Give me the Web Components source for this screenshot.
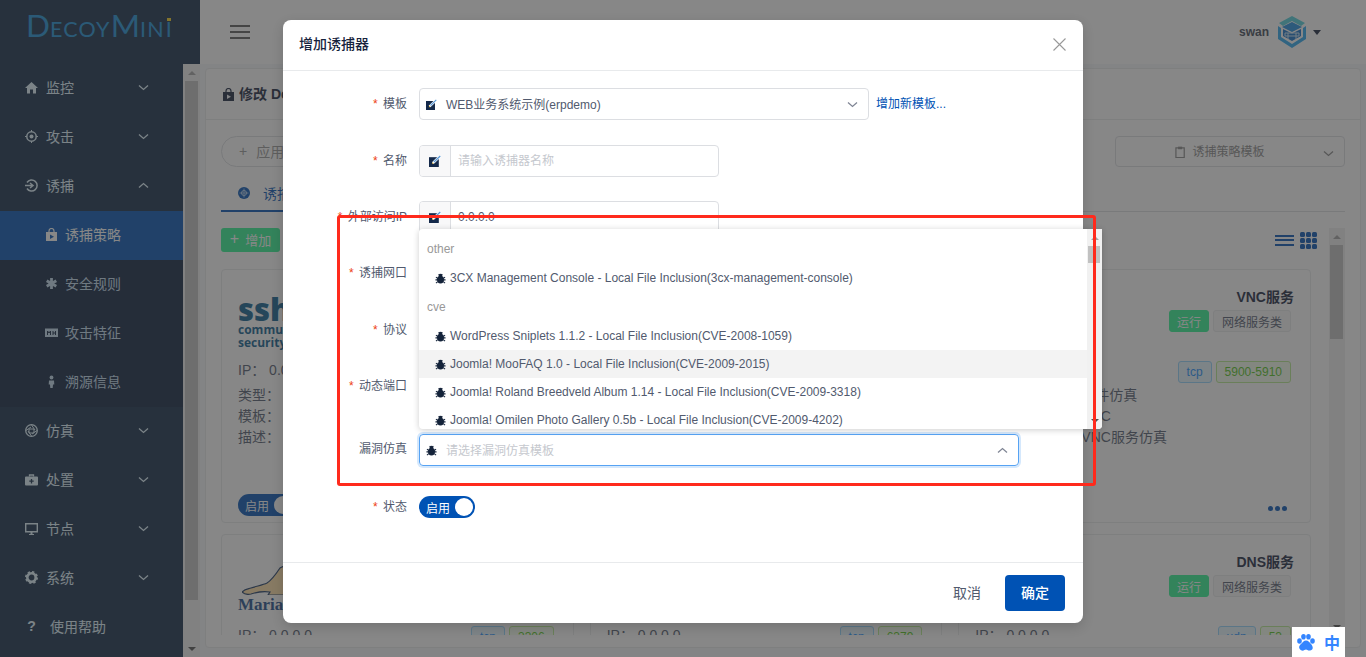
<!DOCTYPE html>
<html lang="zh">
<head>
<meta charset="utf-8">
<title>DecoyMini</title>
<style>
  html, body { margin: 0; height: 657px; overflow: hidden; }
  body { font: 14px "Liberation Sans", "Noto Sans CJK SC", sans-serif; color: #515a6e; background: #f5f7f9; }
</style>
</head>
<body>
<decoy-app></decoy-app>

<script>
const ICONS = {
  home: '<path d="M6.5 1 13 7h-2v5.500H8V8.500H5V12.500H2V7H0z" fill="currentColor"/>',
  target: '<circle cx="6.500" cy="6.500" r="4.700" fill="none" stroke="currentColor" stroke-width="1.500"/><circle cx="6.500" cy="6.500" r="2" fill="currentColor"/><path d="M6.500 0v2M6.500 11v2M0 6.500h2M11 6.500h2" stroke="currentColor"/>',
  login: '<path d="M2 3.500A5.500 5.500 0 1 1 2 9.500" fill="none" stroke="currentColor" stroke-width="1.500"/><path d="M0 6.500h7M5 4l3 2.500L5 9" fill="none" stroke="currentColor" stroke-width="1.500"/>',
  bag: '<path d="M4 4V3a2.500 2.500 0 0 1 5 0v1" fill="none" stroke="currentColor" stroke-width="1.200"/><path d="M1 4h11v9H1z" fill="currentColor"/><path d="M5 6.500v4.500l4-2.200z" fill="var(--cut,#fff)"/>',
  star: '<path d="M6.500 1v11M1.700 3.700l9.600 5.600M11.300 3.700l-9.600 5.600" stroke="currentColor" stroke-width="2.800"/>',
  card: '<path d="M0 2.500h13v8.500H0z" fill="currentColor"/><path d="M2.500 9V5l1.500 2 1.500-2v4M8 5v4M8 7h2.500M10.500 5v4" fill="none" stroke="var(--cut,#0a203c)"/>',
  person: '<circle cx="6.500" cy="2.500" r="1.900" fill="currentColor"/><path d="M4 5.500h5l.3 4H8l-.3 3.500H5.300L5 9.500H3.700z" fill="currentColor"/>',
  aperture: '<circle cx="6.500" cy="6.500" r="5.800" fill="none" stroke="currentColor" stroke-width="1.300"/><path d="M6.500 1 10 6M12 6.500 7 10M6.500 12 3 7M1 6.500 6 3M4 5h5v4H4z" fill="none" stroke="currentColor"/>',
  kit: '<path d="M4.500 3.500V2h4v1.500" fill="none" stroke="currentColor" stroke-width="1.300"/><path d="M1 3.500h11a1 1 0 0 1 1 1v7a1 1 0 0 1-1 1H1a1 1 0 0 1-1-1v-7a1 1 0 0 1 1-1z" fill="currentColor"/><path d="M6.500 6v4.500M4.300 8.200h4.400" stroke="var(--cut,#112a48)" stroke-width="1.300"/>',
  monitor: '<path d="M.7 1.700h11.600v8H.7z" fill="none" stroke="currentColor" stroke-width="1.400"/><path d="M4 12h5v1H4zM5.500 10h2v2h-2z" fill="currentColor"/>',
  gear: '<circle cx="6.500" cy="6.500" r="4.200" fill="none" stroke="currentColor" stroke-width="2.600"/><circle cx="6.500" cy="6.500" r="5.500" fill="none" stroke="currentColor" stroke-width="2" stroke-dasharray="2.300 2"/>',
  edit: '<path d="M0 2h9v9H0z" fill="#14294a"/><path d="M3.500 7.500 10.300.9" stroke="#fff" stroke-width="2.400"/><path d="M4.500 6.500 10.300.9" stroke="#5b9ad8" stroke-width="1.200"/><path d="M2.800 8.300l.4-1.700 1.300 1.300z" fill="#e8c04a"/>',
  bug: '<ellipse cx="6" cy="7.200" rx="3.800" ry="4.300" fill="#14233a"/><circle cx="6" cy="2.800" r="2" fill="#14233a"/><path d="M1 4.500l2 1.500M11 4.500 9 6M.5 7.500h2.500M11.500 7.500H9M1 11l2-1.500M11 11 9 9.500M4 1l1 1.500M8 1 7 2.500" stroke="#14233a" stroke-width="1.100"/>',
  clip: '<path d="M1 2h9v10.500H1z" fill="none" stroke="currentColor" stroke-width="1.300"/><path d="M3.300 .7h4.400v2.800H3.300z" fill="currentColor"/>',
  chevronDown: '<path d="M1 1.500l4.500 4 4.500-4" fill="none" stroke="currentColor" stroke-width="1.300"/>',
  chevronUp: '<path d="M1 5.500l4.500-4 4.500 4" fill="none" stroke="currentColor" stroke-width="1.300"/>'
};

class UiIcon extends HTMLElement {
  constructor() {
    super();
    const size = this.getAttribute('size') || 13;
    const box = this.getAttribute('box') || '0 0 13 13';
    this.attachShadow({ mode: 'open' }).innerHTML = `
      <style>:host { display: inline-flex; flex: none; } svg { display: block; }</style>
      <svg width="${size}" height="${size}" viewBox="${box}">${ICONS[this.getAttribute('name')] || ''}</svg>`;
  }
}
customElements.define('ui-icon', UiIcon);

// fake browser scrollbar, drawn as a column
class ScrollRail extends HTMLElement {
  constructor() {
    super();
    const start = this.getAttribute('start') || 0;
    const len = this.getAttribute('len') || 20;
    this.attachShadow({ mode: 'open' }).innerHTML = `
      <style>
        :host { display: flex; flex-direction: column; flex: none; width: var(--w, 17px); background: #f1f1f1; box-sizing: border-box; }
        .arrow { height: 17px; flex: none; display: flex; align-items: center; justify-content: center; }
        .arrow i { width: 0; height: 0; border: 4px solid transparent; border-top-width: 0; border-bottom: 4px solid #a3a3a3; }
        .arrow.down i { border-bottom-width: 0; border-top: 4px solid #505050; border-bottom-color: transparent; }
        .mid { flex: 1; min-height: 0; }
        .thumb { margin: ${start}px var(--mr, 2px) 0 var(--ml, 2px); height: ${len}px; background: #c1c1c1; }
      </style>
      <div class="arrow"><i></i></div>
      <div class="mid"><div class="thumb"></div></div>
      <div class="arrow down"><i></i></div>`;
  }
}
customElements.define('scroll-rail', ScrollRail);

const sideTpl = document.createElement('template');
sideTpl.innerHTML = `
  <style>
    :host { display: flex; flex-direction: column; width: 200px; flex: none; background: #112a48; height: 657px; }
    .logo { height: 64px; display: flex; align-items: baseline; padding: 11px 0 0 26px; box-sizing: border-box; font-family: "Lato", "Liberation Sans", sans-serif; color: #1a90d8; white-space: nowrap; line-height: 28px; }
    .logo b { font-weight: 400; font-size: 31.500px; }
    .logo span { font-size: 21.500px; letter-spacing: 1.200px; }
    .logo em { font-style: normal; font-size: 21.500px; position: relative; margin-left: 1px; }
    .logo em::before { content: ""; position: absolute; left: 1px; right: 1px; top: 3px; height: 3px; background: #f5d020; }
    .body { flex: 1; display: flex; min-height: 0; }
    nav { flex: 1; min-width: 0; }
    .sub { background: #0a203c; }
  </style>
  <div class="logo"><b>D</b><span>ECOY</span><b>M</b><span>IN</span><em>I</em></div>
  <div class="body">
    <nav>
      <side-item icon="home" label="监控" arrow="down"></side-item>
      <side-item icon="target" label="攻击" arrow="down"></side-item>
      <side-item icon="login" label="诱捕" arrow="up"></side-item>
      <div class="sub">
        <side-item sub active icon="bag" label="诱捕策略"></side-item>
        <side-item sub icon="star" label="安全规则"></side-item>
        <side-item sub icon="card" label="攻击特征"></side-item>
        <side-item sub icon="person" label="溯源信息"></side-item>
      </div>
      <side-item icon="aperture" label="仿真" arrow="down"></side-item>
      <side-item icon="kit" label="处置" arrow="down"></side-item>
      <side-item icon="monitor" label="节点" arrow="down"></side-item>
      <side-item icon="gear" label="系统" arrow="down"></side-item>
      <side-item help label="使用帮助"></side-item>
    </nav>
    <scroll-rail start="0" len="519"></scroll-rail>
  </div>`;
class DecoySidebar extends HTMLElement {
  constructor() {
    super();
    this.attachShadow({ mode: 'open' }).appendChild(sideTpl.content.cloneNode(true));
  }
}
customElements.define('decoy-sidebar', DecoySidebar);

class SideItem extends HTMLElement {
  constructor() {
    super();
    const sub = this.hasAttribute('sub');
    const help = this.hasAttribute('help');
    const arrow = this.getAttribute('arrow');
    this.attachShadow({ mode: 'open' }).innerHTML = `
      <style>
        :host { display: flex; align-items: center; height: 49px; padding: 0 0 3px ${sub ? 45 : 25}px; color: #e0f5ff; font-size: 14px; box-sizing: border-box; }
        :host([active]) { background: #0052b4; color: #fff; --cut: #0052b4; }
        :host([sub]:not([active])) { color: #c3dcf0; }
        .t { margin-left: ${help ? 12 : sub ? 7 : 8}px; width: ${sub ? 'auto' : '92px'}; }
        .q { width: 13px; text-align: center; font-weight: 700; font-size: 14px; }
      </style>
      ${help ? '<span class="q">?</span>' : `<ui-icon name="${this.getAttribute('icon')}"></ui-icon>`}
      <span class="t">${this.getAttribute('label')}</span>
      ${arrow ? `<ui-icon size="11" box="0 0 11 7" name="${arrow === 'up' ? 'chevronUp' : 'chevronDown'}"></ui-icon>` : ''}`;
  }
}
customElements.define('side-item', SideItem);

class TopBar extends HTMLElement {
  constructor() {
    super();
    this.attachShadow({ mode: 'open' }).innerHTML = `
      <style>
        :host { display: flex; align-items: center; height: 64px; flex: none; background: #fff; box-sizing: border-box; padding: 0 45px 0 30px; color: #515a6e; }
        .burger { width: 20px; height: 14px; border-top: 2px solid #5a5a5a; border-bottom: 2px solid #5a5a5a; box-sizing: border-box; position: relative; }
        .burger::after { content: ""; position: absolute; left: 0; right: 0; top: 4px; height: 2px; background: #5a5a5a; }
        .user { margin-left: auto; display: flex; align-items: center; font-size: 12px; font-weight: 700; color: #3d4656; }
        svg { margin-left: 7px; display: block; }
        .caret { width: 0; height: 0; margin-left: 5px; border: 4px solid transparent; border-top: 5px solid #17233d; border-bottom: 0; }
      </style>
      <div class="burger"></div>
      <div class="user"><span>swan</span>
        <svg width="32" height="32" viewBox="0 0 32 32">
          <path d="M16 0 29 7l-4 3-9-5-9 5-4-3z" fill="#4fd0dc"/>
          <path d="M2 10v13l14 9 14-9V10l-3 2v9l-11 7-11-7v-9z" fill="#2aa8f0"/>
          <path d="M16 6l10 5-10 5-10-5z" fill="#1f8ee0"/>
          <path d="M7 13l9 4.500 9-4.500v7l-9 5-9-5z" fill="#1672c8"/>
          <path d="M9 17h14v3H9zM12 17v6M20 17v6" fill="none" stroke="#cfe8f8"/>
        </svg>
        <span class="caret"></span>
      </div>`;
  }
}
customElements.define('top-bar', TopBar);

class UiTag extends HTMLElement {
  constructor() {
    super();
    this.attachShadow({ mode: 'open' }).innerHTML = `
      <style>
        :host { display: inline-flex; align-items: center; justify-content: center; height: 22px; box-sizing: border-box; padding: 0 8px; border-radius: 3px; font-size: 12px; border: 1px solid #e8eaec; background: #f7f7f7; color: #515a6e; white-space: nowrap; }
        :host([kind=run]) { background: #2df591; border-color: #2df591; color: #fff; width: 40px; padding: 0; }
        :host([kind=blue]) { background: #e6f7ff; border-color: #91d5ff; color: #1890ff; }
        :host([kind=green]) { background: #f6ffed; border-color: #b7eb8f; color: #52c41a; }
      </style><slot></slot>`;
  }
}
customElements.define('ui-tag', UiTag);

class UiSwitch extends HTMLElement {
  constructor() {
    super();
    this.attachShadow({ mode: 'open' }).innerHTML = `
      <style>
        :host { display: inline-flex; align-items: center; width: 56px; height: 22px; box-sizing: border-box; border-radius: 11px; background: #0052b4; color: #fff; font-size: 12px; padding: 0 2px 0 7px; justify-content: space-between; }
        i { width: 18px; height: 18px; background: #fff; border-radius: 50%; }
      </style><span>启用</span><i></i>`;
  }
}
customElements.define('ui-switch', UiSwitch);

// only the fields the page passes in are drawn
class ServiceCard extends HTMLElement {
  constructor() {
    super();
    const a = n => this.getAttribute(n) || '';
    const row = (k, v) => `<dt>${k}：</dt><dd>${v}</dd>`;
    this.attachShadow({ mode: 'open' }).innerHTML = `
      <style>
        :host { display: flex; flex-direction: column; height: 254px; box-sizing: border-box; border: 1px solid #e8eaec; border-radius: 4px; background: #fff; padding: 17px 16px 0 16px; position: relative; color: #515a6e; font-size: 14px; }
        .top { display: flex; justify-content: space-between; height: 72px; flex: none; }
        .name { text-align: right; font-weight: 700; color: #17233d; line-height: 20px; }
        .tags { display: flex; gap: 4px; justify-content: flex-end; margin: 3px 3px 0 0; }
        .ip { display: flex; justify-content: space-between; align-items: center; height: 22px; margin: 2px 3px 0 0; flex: none; }
        .ip > span { padding-bottom: 6px; }
        .ip div { display: flex; gap: 4px; }
        dl { display: grid; grid-template-columns: 106px 1fr; margin: 2px 0 0; line-height: 21px; }
        dt, dd { margin: 0; }
        .foot { margin-top: auto; display: flex; justify-content: space-between; align-items: center; height: 22px; margin-bottom: 6px; padding-right: 7px; }
        .dots { display: flex; gap: 2px; margin-top: 6px; }
        .dots i { width: 5px; height: 5px; border-radius: 50%; background: #0052b4; }
      </style>
      <div class="top">
        <div><slot name="logo"></slot></div>
        ${a('name') ? `<div>
          <div class="name">${a('name')}</div>
          <div class="tags"><ui-tag kind="run">运行</ui-tag><ui-tag>网络服务类</ui-tag></div>
        </div>` : ''}
      </div>
      <div class="ip">${a('ip') ? `<span>IP： ${a('ip')}</span>` : '<span></span>'}${a('proto') ? `<div><ui-tag kind="blue">${a('proto')}</ui-tag><ui-tag kind="green">${a('port')}</ui-tag></div>` : ''}</div>
      <dl>${a('labels') ? row('类型', a('kind')) + row('模板', a('tpl')) + row('描述', a('desc')) : ''}</dl>
      <div class="foot">${a('labels') === 'switch' ? '<ui-switch></ui-switch>' : '<span></span>'}${a('desc') ? '<div class="dots"><i></i><i></i><i></i></div>' : ''}</div>`;
  }
}
customElements.define('service-card', ServiceCard);

const pageTpl = document.createElement('template');
pageTpl.innerHTML = `
  <style>
    :host { display: flex; flex-direction: column; margin: 4px 5px 9px; height: 580px; box-sizing: border-box; border: 1px solid #e8eaec; border-radius: 4px; background: #fff; }
    .head { height: 50px; flex: none; display: flex; align-items: center; gap: 4px; padding-left: 16px; border-bottom: 1px solid #e8eaec; font-weight: 700; color: #17233d; --cut: #f5f7f9; }
    .head span { padding-bottom: 2px; }
    .inner { flex: 1; min-height: 0; padding: 16px 15px 12px 15px; display: flex; flex-direction: column; }
    .tools { display: flex; justify-content: space-between; height: 31px; flex: none; }
    .pill { width: 200px; border: 1px solid #dcdee2; border-radius: 16px; display: flex; align-items: center; padding: 0 0 2px 17px; box-sizing: border-box; font-size: 14px; color: #999; gap: 9px; }
    .tpl { width: 230px; border: 1px solid #dcdee2; border-radius: 4px; display: flex; align-items: center; justify-content: center; gap: 5px; padding-right: 20px; font-size: 12px; color: #888; box-sizing: border-box; position: relative; }
    .tpl .chev { position: absolute; right: 10px; top: 11px; }
    .tpl span { padding-bottom: 2px; }
    .tabs { height: 44px; flex: none; border-bottom: 1px solid #dcdee2; display: flex; align-items: flex-end; }
    .tab { width: 90px; height: 44px; box-sizing: border-box; border-bottom: 2px solid #0052b4; margin-bottom: -1px; padding: 15px 0 0 17px; color: #0052b4; display: flex; gap: 13px; }
    .tab svg { display: block; margin-top: 4px; flex: none; }
    .scroll { flex: 1; min-height: 0; display: flex; margin-top: 16px; overflow: hidden; }
    .flow { flex: 1; min-width: 0; overflow: hidden; padding-right: 18px; }
    .bar { display: flex; justify-content: space-between; align-items: center; height: 24px; margin-right: -6px; }
    .add { width: 59px; height: 24px; border-radius: 3px; background: #2df591; color: #fff; font-size: 13px; display: flex; align-items: center; justify-content: center; gap: 6px; padding-bottom: 2px; box-sizing: border-box; }
    .add span:first-child { font-size: 16px; }
    .views { display: flex; align-items: center; gap: 6px; }
    .lines { width: 19px; height: 11px; border-top: 2px solid #0052b4; border-bottom: 2px solid #0052b4; box-sizing: border-box; position: relative; }
    .lines::after { content: ""; position: absolute; left: 0; right: 0; top: 2.500px; height: 2px; background: #0052b4; }
    .dots { display: grid; grid-template-columns: repeat(3, 5px); gap: 1px; }
    .dots i { width: 5px; height: 5px; border-radius: 1.500px; background: #0052b4; }
    .grid { display: grid; grid-template-columns: repeat(3, 1fr); gap: 11px 16px; margin-top: 17px; }
    scroll-rail { --w: 16px; --ml: 1px; --mr: 2px; }
    .ssh { line-height: 1; color: #0c5c8e; font-family: "Open Sans", "Liberation Sans", sans-serif; font-weight: 700; width: 120px; }
    .ssh b { display: block; font-size: 31px; line-height: 26px; margin-top: 9px; }
    .ssh span { display: block; font-size: 12px; line-height: 12px; margin-top: 2px; }
    .maria { width: 130px; font: 700 17px "Liberation Serif", serif; color: #1c4d8c; line-height: 19px; }
    .maria svg { display: block; margin: 13px 0 0 4px; }
  </style>
  <div class="head"><ui-icon name="bag"></ui-icon><span>修改 Decoy</span></div>
  <div class="inner">
    <div class="tools">
      <div class="pill"><span>+</span><span>应用</span></div>
      <div class="tpl"><ui-icon name="clip" size="12"></ui-icon><span>诱捕策略模板</span><ui-icon class="chev" size="11" box="0 0 11 7" name="chevronDown"></ui-icon></div>
    </div>
    <div class="tabs"><div class="tab">
      <svg width="12" height="12" viewBox="0 0 12 12"><circle cx="6" cy="6" r="6" fill="#0052b4"/><circle cx="6" cy="6" r="2.500" fill="none" stroke="#b8d2f0"/><path d="M6 1.500v9M1.500 6h9" stroke="#b8d2f0" stroke-width=".8"/></svg>
      <span>诱捕</span>
    </div></div>
    <div class="scroll">
      <div class="flow">
        <div class="bar">
          <div class="add"><span>+</span><span>增加</span></div>
          <div class="views"><div class="lines"></div><div class="dots"><i></i><i></i><i></i><i></i><i></i><i></i><i></i><i></i><i></i></div></div>
        </div>
        <div class="grid">
          <service-card ip="0.0" labels="switch">
            <div slot="logo" class="ssh"><b>ssh</b><span>commu</span><span style="margin-top:1px">security</span></div>
          </service-card>
          <service-card></service-card>
          <service-card name="VNC服务" ip="0.0.0.0" proto="tcp" port="5900-5910" labels="text" kind="软件仿真" tpl="VNC" desc="VNC服务仿真"></service-card>
          <service-card ip="0.0.0.0" proto="tcp" port="3306">
            <div slot="logo" class="maria">
              <svg width="44" height="30" viewBox="0 0 44 30"><path d="M0 27c3-3 6-3 9-4 6-2 12-3 16-5 5-3 9-9 13-15l6-3v30H26l2-3c-6-1-13 0-19 2-4 1-7 0-9-2z" fill="#ffdea5" stroke="#1c3a66" stroke-width="1.200"/></svg>
              <div>Maria</div>
            </div>
          </service-card>
          <service-card ip="0.0.0.0" proto="tcp" port="6379"></service-card>
          <service-card name="DNS服务" ip="0.0.0.0" proto="udp" port="53"></service-card>
        </div>
      </div>
      <scroll-rail start="0" len="94"></scroll-rail>
    </div>
  </div>`;
class StrategyPage extends HTMLElement {
  constructor() {
    super();
    this.attachShadow({ mode: 'open' }).appendChild(pageTpl.content.cloneNode(true));
  }
}
customElements.define('strategy-page', StrategyPage);

class FormRow extends HTMLElement {
  constructor() {
    super();
    const req = this.hasAttribute('required');
    this.attachShadow({ mode: 'open' }).innerHTML = `
      <style>
        :host { display: flex; align-items: center; height: 32px; flex: none; margin-bottom: 24px; font-size: 12px; color: #515a6e; }
        label { width: 124px; text-align: right; flex: none; white-space: nowrap; padding-bottom: var(--lift, 2px); }
        label i { font-style: normal; color: #ed4014; margin-right: 4px; font-family: "Liberation Mono", monospace; }
        .ctl { margin-left: 12px; flex: 1; display: flex; align-items: center; gap: 7px; min-width: 0; }
      </style>
      <label>${req ? '<i>*</i>' : ''}${this.getAttribute('label')}</label>
      <div class="ctl"><slot></slot></div>`;
  }
}
customElements.define('form-row', FormRow);

class IconInput extends HTMLElement {
  constructor() {
    super();
    const ph = this.getAttribute('placeholder');
    this.attachShadow({ mode: 'open' }).innerHTML = `
      <style>
        :host { display: flex; width: 300px; height: 32px; box-sizing: border-box; border: 1px solid #dcdee2; border-radius: 4px; font-size: 12px; color: #515a6e; }
        .pre { width: 30px; flex: none; background: #f8f8f9; border-right: 1px solid #dcdee2; display: flex; align-items: center; justify-content: center; border-radius: 3px 0 0 3px; }
        .val { padding-left: 7px; line-height: 30px; }
        .ph { color: #c5c8ce; }
      </style>
      <div class="pre"><ui-icon name="edit" size="12" box="0 0 11 11"></ui-icon></div>
      <div class="val ${ph ? 'ph' : ''}">${ph || this.getAttribute('value') || ''}</div>`;
  }
}
customElements.define('icon-input', IconInput);

class IconSelect extends HTMLElement {
  constructor() {
    super();
    const ph = this.getAttribute('placeholder');
    const open = this.hasAttribute('open');
    const icon = this.getAttribute('icon') || 'edit';
    const box = icon === 'bug' ? '0 0 12 12' : '0 0 11 11';
    this.attachShadow({ mode: 'open' }).innerHTML = `
      <style>
        :host { display: flex; align-items: center; width: var(--w, 450px); height: 32px; box-sizing: border-box; border: 1px solid #dcdee2; border-radius: 4px; font-size: 12px; color: #515a6e; padding: 0 10px 0 6px; flex: none; }
        :host([open]) { border-color: #57a3f3; box-shadow: 0 0 0 2px rgba(45, 140, 240, .2); }
        span { margin-left: 9px; flex: 1; padding-bottom: 2px; }
        .ph { color: #c5c8ce; }
      </style>
      <ui-icon name="${icon}" size="11" box="${box}"></ui-icon>
      <span class="${ph ? 'ph' : ''}">${ph || this.getAttribute('value')}</span>
      <ui-icon name="${open ? 'chevronUp' : 'chevronDown'}" size="11" box="0 0 11 7" style="color:#808695"></ui-icon>`;
  }
}
customElements.define('icon-select', IconSelect);

class VulnDropdown extends HTMLElement {
  constructor() {
    super();
    const opt = (t, hover) => `<div class="opt ${hover ? 'hover' : ''}"><ui-icon name="bug" size="11" box="0 0 12 12"></ui-icon><span>${t}</span></div>`;
    this.attachShadow({ mode: 'open' }).innerHTML = `
      <style>
        :host { position: absolute; left: 136px; top: 209px; width: 683px; height: 200px; background: #fff; display: flex; border-radius: 4px 0 4px 4px; box-shadow: 0 1px 6px rgba(0, 0, 0, .2); overflow: hidden; font-size: 12px; color: #515a6e; z-index: 2; }
        .list { flex: 1; min-width: 0; padding-top: 6px; white-space: nowrap; overflow: hidden; }
        .title { height: 29px; line-height: 29px; padding-left: 8px; color: #999; }
        .opt { height: 28px; display: flex; align-items: center; padding-left: 16px; gap: 4px; color: #515a6e; }
        .opt.hover { background: #f3f3f3; }
        scroll-rail { --w: 15px; --ml: 1px; --mr: 2px; }
      </style>
      <div class="list">
        <div class="title">other</div>
        ${opt('3CX Management Console - Local File Inclusion(3cx-management-console)')}
        <div class="title" style="height:30px;line-height:30px">cve</div>
        ${opt('WordPress Sniplets 1.1.2 - Local File Inclusion(CVE-2008-1059)')}
        ${opt('Joomla! MooFAQ 1.0 - Local File Inclusion(CVE-2009-2015)', true)}
        ${opt('Joomla! Roland Breedveld Album 1.14 - Local File Inclusion(CVE-2009-3318)')}
        ${opt('Joomla! Omilen Photo Gallery 0.5b - Local File Inclusion(CVE-2009-4202)')}
      </div>
      <scroll-rail start="0" len="17"></scroll-rail>`;
  }
}
customElements.define('vuln-dropdown', VulnDropdown);

const dlgTpl = document.createElement('template');
dlgTpl.innerHTML = `
  <style>
    :host { position: absolute; left: 283px; top: 20px; width: 800px; height: 603px; background: #fff; border-radius: 8px; box-shadow: 0 4px 12px rgba(0, 0, 0, .15); display: flex; flex-direction: column; z-index: 10; }
    header { height: 51px; flex: none; box-sizing: border-box; border-bottom: 1px solid #e8eaec; display: flex; align-items: center; justify-content: space-between; padding: 0 17px 2px 16px; font-size: 14px; font-weight: 500; color: #17233d; }
    header span { padding-bottom: 2px; }
    .x { width: 13px; height: 13px; display: block; }
    .form { flex: 1; padding-top: 17px; }
    footer { height: 61px; flex: none; box-sizing: border-box; border-top: 1px solid #e8eaec; display: flex; align-items: center; justify-content: flex-end; padding: 0 18px 0 0; font-size: 14px; gap: 24px; color: #515a6e; }
    footer span { padding-bottom: 2px; }
    .ok { width: 60px; height: 36px; border-radius: 4px; background: #0052b4; color: #fff; display: flex; align-items: center; justify-content: center; font-weight: 500; padding-bottom: 2px; box-sizing: border-box; }
    a { color: #0052b4; font-size: 12px; text-decoration: none; white-space: nowrap; padding-bottom: 3px; }
  </style>
  <header><span>增加诱捕器</span>
    <svg class="x" viewBox="0 0 13 13"><path d="M.5.5l12 12M12.500.5l-12 12" stroke="#999" stroke-width="1.100"/></svg>
  </header>
  <div class="form">
    <form-row required label="模板" style="margin-bottom:25px"><icon-select value="WEB业务系统示例(erpdemo)"></icon-select><a href="#">增加新模板...</a></form-row>
    <form-row required label="名称"><icon-input placeholder="请输入诱捕器名称"></icon-input></form-row>
    <form-row required label="外部访问IP"><icon-input value="0.0.0.0"></icon-input></form-row>
    <form-row required label="诱捕网口" style="margin-bottom:25px"></form-row>
    <form-row required label="协议"></form-row>
    <form-row required label="动态端口" style="margin-bottom:32px"></form-row>
    <form-row label="漏洞仿真" style="margin-bottom:25px;--lift:6px"><icon-select open icon="bug" style="--w:600px" placeholder="请选择漏洞仿真模板"></icon-select></form-row>
    <form-row required label="状态"><ui-switch></ui-switch></form-row>
  </div>
  <footer><span>取消</span><div class="ok">确定</div></footer>
  <vuln-dropdown></vuln-dropdown>`;
class AddDialog extends HTMLElement {
  constructor() {
    super();
    this.attachShadow({ mode: 'open' }).appendChild(dlgTpl.content.cloneNode(true));
  }
}
customElements.define('add-dialog', AddDialog);

class ImeBadge extends HTMLElement {
  constructor() {
    super();
    this.attachShadow({ mode: 'open' }).innerHTML = `
      <style>
        :host { position: absolute; left: 1292px; top: 627px; width: 53px; height: 30px; background: #fff; display: flex; align-items: center; gap: 9px; padding-left: 5px; box-sizing: border-box; color: #3385ff; z-index: 30; font-size: 16px; font-weight: 700; }
        svg { display: block; }
      </style>
      <svg width="18" height="17" viewBox="0 0 18 17" fill="#3385ff">
        <ellipse cx="2.500" cy="7" rx="2.300" ry="2.800"/><ellipse cx="6.500" cy="2.800" rx="2.300" ry="2.800"/><ellipse cx="11.500" cy="2.800" rx="2.300" ry="2.800"/><ellipse cx="15.500" cy="7" rx="2.300" ry="2.800"/>
        <path d="M9 6.500c2.500 0 3.500 2 5 3.500S17 15 14 16.200 10.500 15.500 9 15.500s-2.500 2-5 .7S1.500 12 4 10 6.500 6.500 9 6.500z"/>
      </svg>
      <span>中</span>`;
  }
}
customElements.define('ime-badge', ImeBadge);

const appTpl = document.createElement('template');
appTpl.innerHTML = `
  <style>
    :host { display: flex; width: 1366px; height: 657px; position: relative; overflow: hidden; }
    main { flex: 1; min-width: 0; display: flex; flex-direction: column; }
    .mask { position: absolute; inset: 0; background: rgba(55, 55, 55, .6); z-index: 5; }
    .mark { position: absolute; left: 337px; top: 215px; width: 759px; height: 271px; box-sizing: border-box; border: 3px solid #ff2a1c; border-radius: 3px; z-index: 20; }
  </style>
  <decoy-sidebar></decoy-sidebar>
  <main><top-bar></top-bar><strategy-page></strategy-page></main>
  <div class="mask"></div>
  <add-dialog></add-dialog>
  <div class="mark"></div>
  <ime-badge></ime-badge>`;
class DecoyApp extends HTMLElement {
  constructor() {
    super();
    this.attachShadow({ mode: 'open' }).appendChild(appTpl.content.cloneNode(true));
  }
}
customElements.define('decoy-app', DecoyApp);
</script>
</body>
</html>
